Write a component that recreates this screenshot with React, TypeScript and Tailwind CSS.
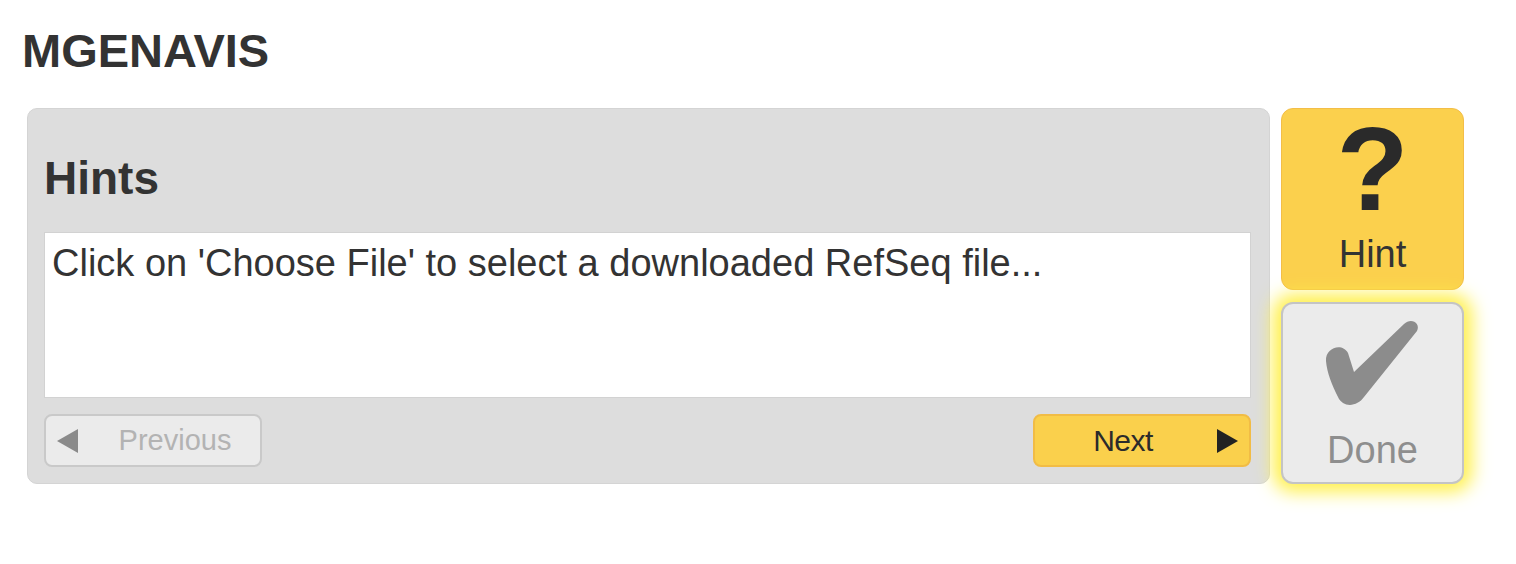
import React from 'react';

const font = { fontFamily: '"Liberation Sans", Arial, sans-serif' };

const CheckMark = () => (
  <svg width="100" height="92" viewBox="0 0 100 92" className="block">
    <path
      d="M3,44 C2,31 19,25 25,36 L31,55 L81,7 C88,0 98,6 94,14 L41,80 C34,90 20,91 15,80 C9,68 4,56 3,44 Z"
      fill="#8c8c8c"
    />
  </svg>
);

const HintsPanel = () => (
  <div className="w-[1243px] h-[376px] rounded-[10px] bg-[#dddddd] border border-[#d4d4d4] pl-[16px] pr-[18px] pt-[46px] flex flex-col">
    <h2 className="text-[46px] leading-none font-bold text-[#333333]">Hints</h2>
    <div className="mt-[31px] h-[166px] bg-white border border-[#d2d2d2] pl-[7px] pt-[11px]">
      <p className="text-[38px] leading-none text-[#333333]">
        Click on 'Choose File' to select a downloaded RefSeq file...
      </p>
    </div>
    <div className="mt-[16px] flex justify-between">
      <button className="w-[218px] h-[53px] rounded-[8px] bg-[#ebebeb] border-2 border-[#c9c9c9] flex items-center pl-[11px]">
        <span className="w-0 h-0 border-y-[12px] border-y-transparent border-r-[21px] border-r-[#8a8a8a]" />
        <span className="flex-1 text-center pl-[12px] text-[29px] leading-none text-[#b3b3b3]">Previous</span>
      </button>
      <button className="w-[218px] h-[53px] rounded-[8px] bg-[#fad04c] border-2 border-[#f1bc45] flex items-center pr-[11px]">
        <span className="flex-1 text-center text-[30px] leading-none text-[#2b2b2b] pr-[6px] tracking-[-0.5px]">Next</span>
        <span className="w-0 h-0 border-y-[12px] border-y-transparent border-l-[21px] border-l-[#222222]" />
      </button>
    </div>
  </div>
);

export default function App() {
  return (
    <div className="w-[1516px] h-[564px] bg-white pt-[27px] pl-[22px]" style={font}>
      <h1 className="text-[47px] leading-none font-bold text-[#333333]">MGENAVIS</h1>
      <div className="mt-[34px] ml-[5px] flex gap-[11px]">
        <HintsPanel />
        <div className="w-[183px] flex flex-col gap-[12px]">
          <button className="h-[182px] rounded-[12px] bg-[#fbd04d] border border-[#f3be48] flex flex-col items-center pt-[1px]">
            <span className="text-[118px] leading-none font-bold text-[#2a2a2a]">?</span>
            <span className="mt-[7px] text-[38px] leading-none text-[#333333]">Hint</span>
          </button>
          <button className="h-[182px] rounded-[12px] bg-[#ebebeb] border-2 border-[#c4c4c4] shadow-[0_0_18px_8px_#fff04a] flex flex-col items-center pt-[13px]">
            <CheckMark />
            <span className="mt-[22px] text-[38px] leading-none text-[#8e8e8e]">Done</span>
          </button>
        </div>
      </div>
    </div>
  );
}
